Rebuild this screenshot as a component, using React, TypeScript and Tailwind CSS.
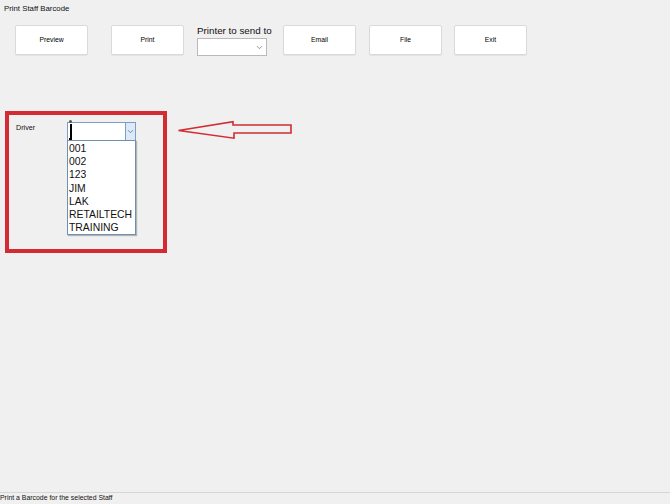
import React from "react";

const items = ["001", "002", "123", "JIM", "LAK", "RETAILTECH", "TRAINING"];

function Btn({ label, className }: { label: string; className: string }) {
  return (
    <div
      className={
        "h-[30px] w-[73px] flex items-center justify-center bg-white border border-[#dadada] rounded-[2px] shadow-[0_1px_1px_rgba(0,0,0,0.06)] text-[6.8px] text-black " +
        className
      }
    >
      {label}
    </div>
  );
}

function Chevron({ color }: { color: string }) {
  return (
    <svg width="7" height="5" viewBox="0 0 7 5" fill="none">
      <path d="M1 1.2 L3.5 3.7 L6 1.2" stroke={color} strokeWidth="0.9" />
    </svg>
  );
}

export default function App() {
  return (
    <div
      className="w-[670px] h-[504px] bg-[#f0f0f0] flex flex-col overflow-hidden text-black"
      style={{ fontFamily: '"Liberation Sans", Arial, sans-serif' }}
    >
      {/* title */}
      <div className="h-[18px] pl-[4px] flex items-center text-[7.8px] text-[#111]">
        Print Staff Barcode
      </div>

      {/* toolbar */}
      <div className="mt-[7px] flex items-start">
        <Btn label="Preview" className="ml-[15px]" />
        <Btn label="Print" className="ml-[23px] w-[72px]" />
        <div className="ml-[13px] w-[74px] flex flex-col">
          <div className="h-[12px] leading-[12px] text-[9.8px] text-[#111] whitespace-nowrap">
            Printer to send to
          </div>
          <div className="mt-[1px] w-[70px] h-[18px] bg-white border border-[#b9b9b9] flex items-center justify-end pr-[3px]">
            <Chevron color="#888" />
          </div>
        </div>
        <Btn label="Email" className="ml-[12px]" />
        <Btn label="File" className="ml-[13px]" />
        <Btn label="Exit" className="ml-[12px]" />
      </div>

      {/* content */}
      <div className="mt-[55px] ml-[5px] flex items-start">
        <div className="w-[162px] h-[142px] border-[4px] border-[#d22b34] flex items-start pl-[7px]">
          <div className="w-[51px] mt-[8px] text-[7.2px] leading-[9px] text-[#111]">Driver</div>
          <div className="relative mt-[7px] w-[69px] h-[19px] bg-white border border-[#7c9ec6] flex">
            <div className="flex-1 relative">
              <div className="absolute left-[1px] top-[-3px] w-[3px] h-[3px] rounded-full bg-[#555]" />
              <div className="absolute left-[1.5px] top-[1px] w-[2px] h-[14px] bg-black" />
              <div className="absolute left-[1px] top-[15px] w-[3px] h-[2px] bg-black" />
            </div>
            <div className="w-[10px] h-full bg-[#dce9f6] border-l border-[#7c9ec6] flex items-center justify-center">
              <Chevron color="#6a7f99" />
            </div>
            <div className="absolute left-[-1px] top-full w-[69px] pt-[1px] bg-white border border-[#6f8fb3] shadow-[1px_1px_1px_rgba(0,0,0,0.25)] flex flex-col">
              {items.map((t) => (
                <div key={t} className="h-[13.2px] leading-[13.2px] pl-[1px] text-[10.4px] text-[#111] whitespace-nowrap">
                  {t}
                </div>
              ))}
            </div>
          </div>
        </div>
        <svg className="ml-[10px] mt-[9px]" width="116" height="20" viewBox="0 0 116 20" fill="none">
          <path
            d="M1.5 10.5 L56 1.8 L56 5 L114 5 L114 13 L57 13 L57 18.2 Z"
            stroke="#d22b34"
            strokeWidth="1.6"
            strokeLinejoin="miter"
          />
        </svg>
      </div>

      <div className="flex-1" />

      {/* status bar */}
      <div className="h-[12px] border-t border-[#d6d6d6] flex items-center text-[6.9px] text-[#111]">
        Print a Barcode for the selected Staff
      </div>
    </div>
  );
}
